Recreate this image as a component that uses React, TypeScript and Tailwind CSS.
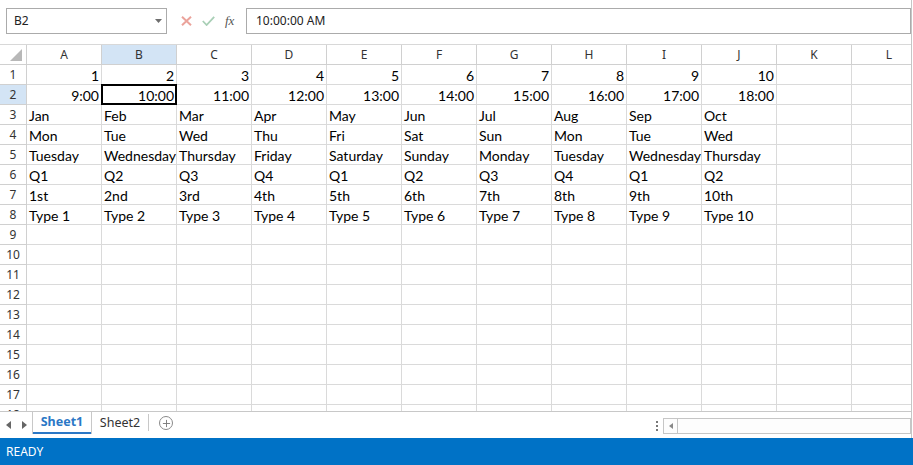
import { Plus } from "lucide-react";

const cols = ["A", "B", "C", "D", "E", "F", "G", "H", "I", "J", "K", "L"];

type Cell = { v: string; num?: boolean };

const num = (arr: string[]): Cell[] => arr.map((v) => ({ v, num: true }));
const txt = (arr: string[]): Cell[] => arr.map((v) => ({ v }));

const data: Cell[][] = [
  num(["1", "2", "3", "4", "5", "6", "7", "8", "9", "10"]),
  num(["9:00", "10:00", "11:00", "12:00", "13:00", "14:00", "15:00", "16:00", "17:00", "18:00"]),
  txt(["Jan", "Feb", "Mar", "Apr", "May", "Jun", "Jul", "Aug", "Sep", "Oct"]),
  txt(["Mon", "Tue", "Wed", "Thu", "Fri", "Sat", "Sun", "Mon", "Tue", "Wed"]),
  txt(["Tuesday", "Wednesday", "Thursday", "Friday", "Saturday", "Sunday", "Monday", "Tuesday", "Wednesday", "Thursday"]),
  txt(["Q1", "Q2", "Q3", "Q4", "Q1", "Q2", "Q3", "Q4", "Q1", "Q2"]),
  txt(["1st", "2nd", "3rd", "4th", "5th", "6th", "7th", "8th", "9th", "10th"]),
  txt(["Type 1", "Type 2", "Type 3", "Type 4", "Type 5", "Type 6", "Type 7", "Type 8", "Type 9", "Type 10"]),
];

const rowCount = 18;
const uiFont = "font-['Noto_Sans','Open_Sans',sans-serif]";
const cellFont = "font-['Lato','Liberation_Sans',sans-serif]";

function FormulaBar() {
  return (
    <div className={`h-[44px] shrink-0 flex items-start pt-[8px] pl-[6px] bg-white ${uiFont}`}>
      <div className="w-[161px] h-[26px] border border-[#ababab] flex items-center justify-between pl-[7px] pr-[4px] text-[12px] text-[#222]">
        <span>B2</span>
        <svg width="7" height="4" viewBox="0 0 7 4">
          <path d="M0 0h7L3.5 4z" fill="#6e6e6e" />
        </svg>
      </div>
      <div className="w-[79px] h-[26px] flex items-center pl-[14px] gap-[10px]">
        <svg width="11" height="10" viewBox="0 0 11 10">
          <path d="M1 0.8l9 8.4M10 0.8l-9 8.4" stroke="#eba39b" strokeWidth="2" />
        </svg>
        <svg width="13" height="10" viewBox="0 0 13 10">
          <path d="M0.8 5l3.8 4L12.2 0.8" stroke="#a9cfb6" strokeWidth="1.8" fill="none" />
        </svg>
        <span className="italic text-[13px] text-[#555] font-['Liberation_Serif',serif] -mt-[1px]">fx</span>
      </div>
      <div className="flex-1 h-[26px] border border-[#ababab] flex items-center pl-[9px] text-[12px] text-[#222]">
        10:00:00 AM
      </div>
    </div>
  );
}

function Grid() {
  return (
    <div className="flex-1 overflow-hidden bg-white">
      <div className="flex h-[21px] border-t border-[#d8d8d8]">
        <div className="w-[27px] shrink-0 border-r border-b border-[#d0d0d0] flex items-end justify-end pr-[4px] pb-[3px]">
          <svg width="12" height="12" viewBox="0 0 12 12">
            <path d="M12 0V12H0z" fill="#b8b8b8" />
          </svg>
        </div>
        {cols.map((c) => (
          <div
            key={c}
            className={`w-[75px] shrink-0 border-r border-b border-[#d0d0d0] flex items-center justify-center text-[12px] text-[#333] ${uiFont} ${
              c === "B" ? "bg-[#d3e4f5]" : ""
            }`}
          >
            {c}
          </div>
        ))}
      </div>
      {Array.from({ length: rowCount }, (_, r) => (
        <div key={r} className="flex h-[20px]">
          <div
            className={`w-[27px] shrink-0 border-r border-b border-[#d0d0d0] flex items-center justify-center text-[12px] text-[#333] ${uiFont} ${
              r === 1 ? "bg-[#d3e4f5]" : ""
            }`}
          >
            {r + 1}
          </div>
          {cols.map((c, ci) => {
            const cell = data[r]?.[ci];
            const selected = r === 1 && ci === 1;
            return (
              <div
                key={c}
                className={`relative w-[75px] shrink-0 border-r border-b border-[#dadada] flex items-center px-[2px] pt-[1px] text-[14px] text-black whitespace-nowrap ${cellFont} ${
                  cell?.num ? "justify-end" : "justify-start"
                }`}
              >
                {cell?.v}
                {selected && (
                  <div className="absolute -left-[1px] -top-[1px] -right-[1px] -bottom-[1px] border-2 border-black" />
                )}
              </div>
            );
          })}
        </div>
      ))}
    </div>
  );
}

function SheetTabs() {
  return (
    <div className={`h-[27px] shrink-0 flex items-start border-t border-[#c8c8c8] bg-white ${uiFont}`}>
      <div className="w-[32px] h-[26px] flex items-center pl-[6px] gap-[11px]">
        <svg width="5" height="8" viewBox="0 0 5 8">
          <path d="M5 0v8L0 4z" fill="#666" />
        </svg>
        <svg width="5" height="8" viewBox="0 0 5 8">
          <path d="M0 0v8l5-4z" fill="#666" />
        </svg>
      </div>
      <div className="w-[60px] h-[22px] border-l border-r border-[#c8c8c8] flex flex-col">
        <div className="flex-1 flex items-center justify-center text-[12.5px] font-bold text-[#2b78c6]">Sheet1</div>
        <div className="h-[2px] bg-[#2b78c6]" />
      </div>
      <div className="w-[56px] h-[22px] flex items-center justify-center text-[12.5px] text-[#333]">Sheet2</div>
      <div className="w-[1px] h-[17px] mt-[2px] bg-[#c8c8c8]" />
      <div className="ml-[10px] mt-[4px] w-[14px] h-[14px] rounded-full border border-[#8a8a8a] flex items-center justify-center">
        <Plus size={11} strokeWidth={2} color="#777" />
      </div>
      <div className="flex-1" />
      <div className="mt-[9px] flex flex-col gap-[2px] mr-[5px]">
        <div className="w-[2px] h-[2px] bg-[#777]" />
        <div className="w-[2px] h-[2px] bg-[#777]" />
        <div className="w-[2px] h-[2px] bg-[#777]" />
      </div>
      <div className="mt-[6px] w-[248px] h-[16px] border border-[#c6c6c6] flex bg-[#fdfdfd]">
        <div className="w-[14px] h-full border-r border-[#c6c6c6] flex items-center justify-center">
          <svg width="4" height="6" viewBox="0 0 4 6">
            <path d="M4 0v6L0 3z" fill="#888" />
          </svg>
        </div>
        <div className="flex-1" />
      </div>
    </div>
  );
}

export default function App() {
  return (
    <div className="w-[913px] h-[465px] flex flex-col overflow-hidden bg-white">
      <div className="flex-1 flex flex-col border-r border-[#c6c6c6] w-[912px] min-h-0">
        <FormulaBar />
        <Grid />
        <SheetTabs />
      </div>
      <div className={`h-[27px] shrink-0 bg-[#0072c6] flex items-center pl-[6px] text-[12px] text-white ${uiFont}`}>
        READY
      </div>
    </div>
  );
}
